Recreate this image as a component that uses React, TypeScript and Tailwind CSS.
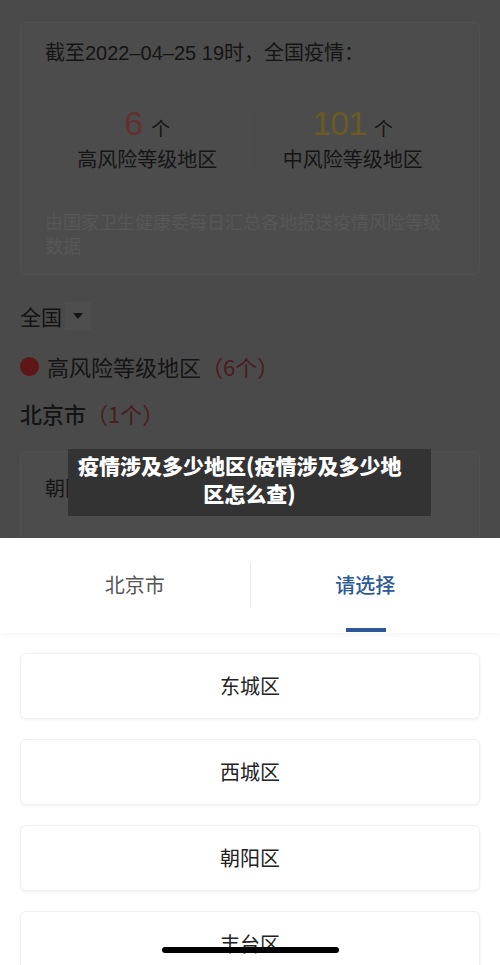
import React from "react";

const font = { fontFamily: '"Noto Sans CJK SC", "Noto Sans", sans-serif' };
const mixed = { fontFamily: '"Liberation Sans", "Noto Sans CJK SC", sans-serif' };

const districts = ["东城区", "西城区", "朝阳区", "丰台区"];

export default function App() {
  return (
    <div className="relative w-[500px] h-[965px] overflow-hidden bg-white" style={font}>
      {/* dimmed page behind the picker sheet */}
      <div className="h-[538px] bg-[#4a4a4a] px-5 pt-[22px] overflow-hidden">
        <div className="rounded-md border border-[#515151] bg-[#4c4c4c] px-[24px] pt-[16px] pb-[17px]">
          <div className="text-[20px] leading-[28px] text-[#141414]" style={mixed}>
            截至2022–04–25 19时，全国疫情：
          </div>
          <div className="mt-[39px] flex">
            <div className="flex-1 flex flex-col items-center">
              <div className="flex items-end gap-[8px] leading-none">
                <span className="text-[34px] text-[#633030]" style={mixed}>6</span>
                <span className="text-[19px] pb-[3px] text-[#141414]">个</span>
              </div>
              <div className="mt-[6px] text-[20px] leading-[26px] text-[#141414]">高风险等级地区</div>
            </div>
            <div className="w-px bg-[#4f4f4f] my-[2px]" />
            <div className="flex-1 flex flex-col items-center">
              <div className="flex items-end gap-[8px] leading-none">
                <span className="text-[34px] tracking-[-1px] text-[#6b5a22]" style={mixed}>101</span>
                <span className="text-[19px] pb-[3px] text-[#141414]">个</span>
              </div>
              <div className="mt-[6px] text-[20px] leading-[26px] text-[#141414]">中风险等级地区</div>
            </div>
          </div>
          <div className="mt-[37px] text-[18px] leading-[24px] text-[#575757]">
            由国家卫生健康委每日汇总各地报送疫情风险等级数据
          </div>
        </div>

        <div className="mt-[26px] flex items-center">
          <span className="text-[21px] leading-[30px] text-[#141414]">全国</span>
          <span className="ml-[3px] flex h-[28px] w-[26px] items-center justify-center bg-[#4e4e4e]">
            <svg width="12" height="8" viewBox="0 0 12 8">
              <path d="M1 1 L11 1 L6 7 Z" fill="#141414" />
            </svg>
          </span>
        </div>

        <div className="mt-[20px] flex items-center">
          <span className="h-[19px] w-[19px] rounded-full bg-[#5e1616]" />
          <span className="ml-[8px] text-[22px] leading-[30px] text-[#141414]">高风险等级地区</span>
          <span className="text-[22px] leading-[30px] text-[#4a1c1c]">（6个）</span>
        </div>

        <div className="mt-[17px] flex items-center">
          <span className="text-[22px] leading-[30px] font-medium text-[#141414]">北京市</span>
          <span className="text-[22px] leading-[30px] text-[#4a1c1c]">（1个）</span>
        </div>

        <div className="mt-[23px] h-[120px] rounded-md border border-[#515151] bg-[#4c4c4c] px-[24px] pt-[22px]">
          <span className="text-[20px] leading-[28px] text-[#141414]">朝阳区</span>
          <span className="text-[20px] leading-[28px] text-[#4a1c1c]">（1个）</span>
        </div>
      </div>

      {/* caption laid over the page */}
      <div className="absolute left-[68px] top-[449px] w-[363px] h-[67px] bg-[#333333] pt-[2px] text-[21px] leading-[28px] font-black text-white">
        <p className="pl-[10px] whitespace-nowrap">疫情涉及多少地区(疫情涉及多少地</p>
        <p className="text-center">区怎么查)</p>
      </div>

      {/* picker sheet */}
      <div className="bg-white">
        <div className="relative flex h-[95px] shadow-[0_2px_4px_rgba(0,0,0,0.04)]">
          <div className="flex flex-1 items-center justify-center pl-[20px] pb-[2px]">
            <span className="text-[20px] text-[#555555]">北京市</span>
          </div>
          <div className="mt-[25px] h-[45px] w-px bg-[#ececec]" />
          <div className="relative flex flex-1 items-center justify-center pr-[20px] pb-[2px]">
            <span className="text-[20px] font-medium text-[#2c5a98]">请选择</span>
            <span className="absolute bottom-[1px] left-[95px] h-[4px] w-[40px] bg-[#2d5797]" />
          </div>
        </div>

        <div className="flex flex-col gap-[20px] px-5 pt-[20px]">
          {districts.map((d) => (
            <div
              key={d}
              className="flex h-[66px] items-center justify-center rounded-md border border-[#f0f0f0] bg-white shadow-[0_1px_3px_rgba(0,0,0,0.06)]"
            >
              <span className="text-[20px] text-[#222222]">{d}</span>
            </div>
          ))}
        </div>
      </div>

      {/* home indicator */}
      <div className="absolute left-[162px] top-[947px] h-[6px] w-[177px] rounded-full bg-black" />
    </div>
  );
}
